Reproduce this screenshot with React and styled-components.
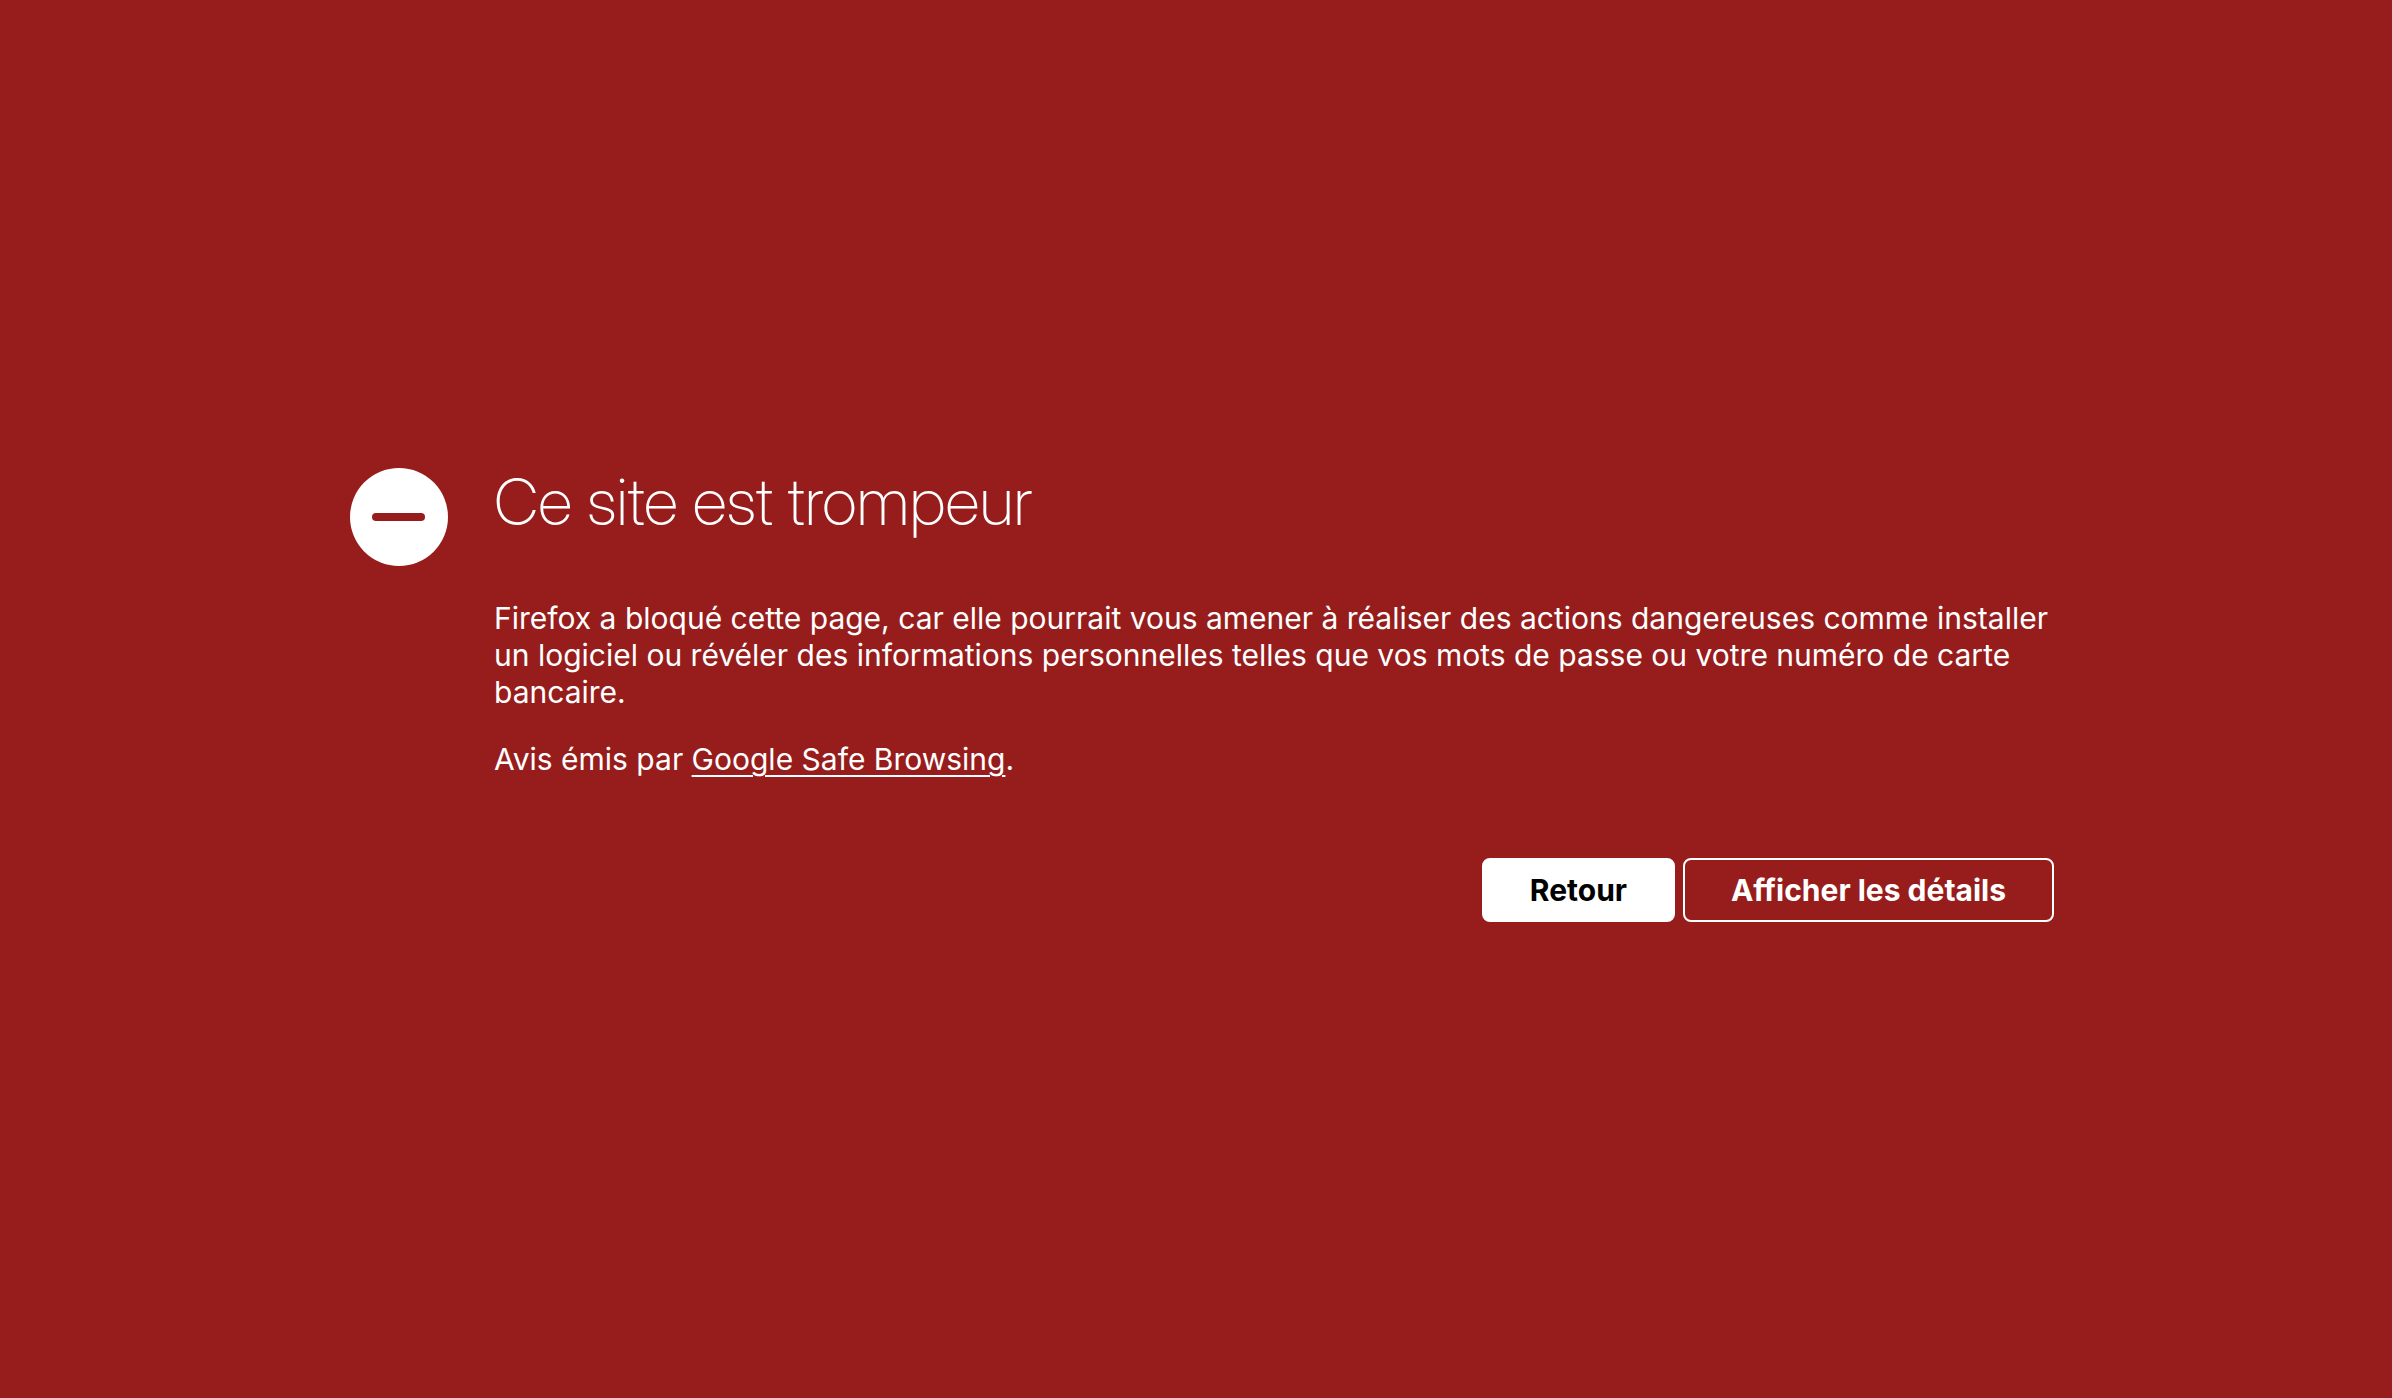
import styled, { createGlobalStyle } from "styled-components";

const GlobalStyle = createGlobalStyle`
  body {
    margin: 0;
    background-color: #961d1c;
    color: #fff;
    font-family: Inter, "Liberation Sans", sans-serif;
    font-size: 30px;
    line-height: 37px;
  }
`;

const Page = styled.main`
  display: flex;
  align-items: center;
  justify-content: center;
  box-sizing: border-box;
  min-height: 100vh;
  padding: 0 48px 8px 60px;
`;

const Warning = styled.section`
  display: flex;
  align-items: flex-start;
  gap: 46px;
  width: 100%;
  max-width: 1704px;
`;

const BlockedIcon = styled.svg`
  flex: none;
  width: 98px;
  height: 98px;
`;

const Content = styled.div`
  flex: 1;
`;

const Title = styled.h1`
  margin: 0 0 64px;
  font-family: "Inter Display", Inter, sans-serif;
  font-size: 65px;
  font-weight: 200;
  line-height: 68px;
`;

const Paragraph = styled.p`
  margin: 0 0 30px;
`;

const Link = styled.a`
  color: inherit;
  text-decoration-thickness: 2px;
  text-underline-offset: 5px;
`;

const ButtonBar = styled.div`
  display: flex;
  justify-content: flex-end;
  gap: 8px;
  margin-top: 80px;
`;

const Button = styled.button`
  padding: 0 46px;
  height: 64px;
  border: 2px solid #fff;
  border-radius: 8px;
  background-color: ${({ $primary }) => ($primary ? "#fff" : "transparent")};
  color: ${({ $primary }) => ($primary ? "#000" : "#fff")};
  font: inherit;
  font-weight: 700;
`;

export default function App() {
  return (
    <Page>
      <GlobalStyle />
      <Warning>
        <BlockedIcon viewBox="0 0 98 98" aria-hidden="true">
          <circle cx="49" cy="49" r="49" fill="#fff" />
          <rect x="22" y="45" width="53" height="8" rx="4" fill="#961d1c" />
        </BlockedIcon>
        <Content>
          <Title>Ce site est trompeur</Title>
          <Paragraph>
            Firefox a bloqué cette page, car elle pourrait vous amener à
            réaliser des actions dangereuses comme installer un logiciel ou
            révéler des informations personnelles telles que vos mots de passe
            ou votre numéro de carte bancaire.
          </Paragraph>
          <Paragraph>
            Avis émis par <Link href="#">Google Safe Browsing</Link>.
          </Paragraph>
          <ButtonBar>
            <Button type="button" $primary>
              Retour
            </Button>
            <Button type="button">Afficher les détails</Button>
          </ButtonBar>
        </Content>
      </Warning>
    </Page>
  );
}
